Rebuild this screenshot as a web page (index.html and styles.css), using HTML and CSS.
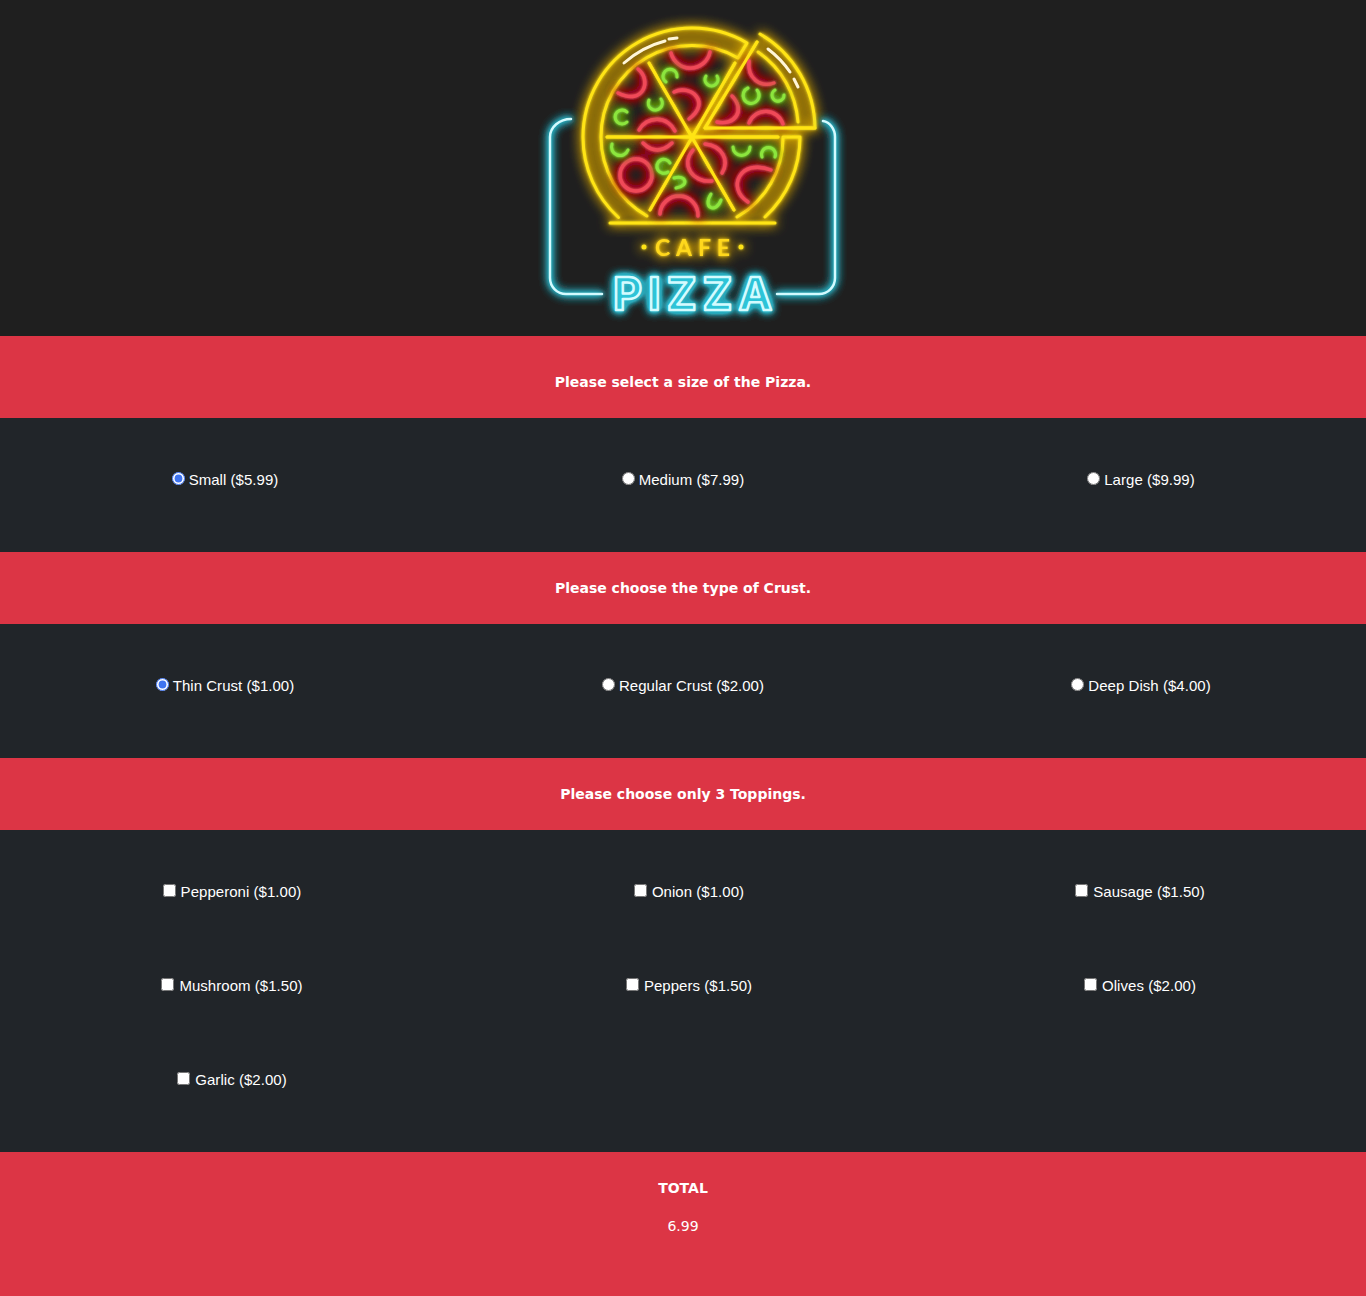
FILE: index.html
```html
<!DOCTYPE html>
<html lang="en">
<head>
  <meta charset="UTF-8">
  <meta name="viewport" content="width=device-width, initial-scale=1.0">
  <title>Cafe Pizza</title>
  <link rel="stylesheet" href="styles.css">
</head>
<body>

<header class="logo-bar">
  <svg class="logo" viewBox="500 0 366 336" width="366" height="336" role="img" aria-label="Cafe Pizza">
    <defs>
      <filter id="glow-yellow" x="-30%" y="-30%" width="160%" height="160%">
        <feGaussianBlur in="SourceAlpha" stdDeviation="6" result="blur"/>
        <feFlood flood-color="#c99a00"/>
        <feComposite in2="blur" operator="in" result="tint"/>
        <feComponentTransfer in="tint" result="halo"><feFuncA type="linear" slope="2.8"/></feComponentTransfer>
        <feGaussianBlur in="SourceGraphic" stdDeviation="1.5" result="near"/>
        <feMerge>
          <feMergeNode in="halo"/>
          <feMergeNode in="near"/>
          <feMergeNode in="SourceGraphic"/>
        </feMerge>
      </filter>
      <filter id="glow-red" x="-40%" y="-40%" width="180%" height="180%">
        <feGaussianBlur in="SourceAlpha" stdDeviation="6" result="blur"/>
        <feFlood flood-color="#a30f1a"/>
        <feComposite in2="blur" operator="in" result="tint"/>
        <feComponentTransfer in="tint" result="halo"><feFuncA type="linear" slope="4"/></feComponentTransfer>
        <feGaussianBlur in="SourceGraphic" stdDeviation="1" result="near"/>
        <feMerge>
          <feMergeNode in="halo"/>
          <feMergeNode in="near"/>
          <feMergeNode in="SourceGraphic"/>
        </feMerge>
      </filter>
      <filter id="glow-green" x="-40%" y="-40%" width="180%" height="180%">
        <feGaussianBlur in="SourceAlpha" stdDeviation="4" result="blur"/>
        <feFlood flood-color="#5f9a14"/>
        <feComposite in2="blur" operator="in" result="tint"/>
        <feComponentTransfer in="tint" result="halo"><feFuncA type="linear" slope="3"/></feComponentTransfer>
        <feGaussianBlur in="SourceGraphic" stdDeviation="1" result="near"/>
        <feMerge>
          <feMergeNode in="halo"/>
          <feMergeNode in="near"/>
          <feMergeNode in="SourceGraphic"/>
        </feMerge>
      </filter>
      <filter id="glow-cyan" x="-30%" y="-30%" width="160%" height="160%">
        <feGaussianBlur in="SourceAlpha" stdDeviation="5" result="blur"/>
        <feFlood flood-color="#2a9fb0"/>
        <feComposite in2="blur" operator="in" result="tint"/>
        <feComponentTransfer in="tint" result="halo"><feFuncA type="linear" slope="3"/></feComponentTransfer>
        <feGaussianBlur in="SourceGraphic" stdDeviation="2" result="near"/>
        <feMerge>
          <feMergeNode in="halo"/>
          <feMergeNode in="near"/>
        </feMerge>
      </filter>
      <filter id="soft"><feGaussianBlur stdDeviation="2"/></filter>
    </defs>

    <!-- crust tint -->
    <g class="crust-fill" filter="url(#soft)">
      <path d="M618.5 217.5A109 109 0 0 1 583 137A109 109 0 0 1 747 43L738 58A91 91 0 0 0 601 137A91 91 0 0 0 647 216Z"/>
      <path d="M760 34A110 110 0 0 1 815 128L798 122A93 93 0 0 0 758 52Z"/>
      <path d="M765 217A109 109 0 0 0 800 137L783 137A91 91 0 0 1 737 217Z"/>
    </g>

    <!-- pizza outline -->
    <g class="neon yellow" filter="url(#glow-yellow)">
      <path d="M618.5 217.5A109 109 0 0 1 583 137A109 109 0 0 1 747 43L738 58A91 91 0 0 0 601 137A91 91 0 0 0 647 216"/>
      <path d="M765 217A109 109 0 0 0 800 137L783 137A91 91 0 0 1 737 217"/>
      <path d="M607 137H778"/>
      <path d="M649 63L734 210"/>
      <path d="M735 63L650 210"/>
      <path d="M610 223H775"/>
      <path d="M757 42L705 128H815A110 110 0 0 0 760 34"/>
      <path d="M758 52A93 93 0 0 1 798 122"/>
      <circle class="dot" cx="644" cy="247" r="1"/>
      <circle class="dot" cx="741" cy="247" r="1"/>
      <text class="cafe" x="655" y="256" textLength="75">CAFE</text>
    </g>

    <!-- pepperoni -->
    <g class="neon red" filter="url(#glow-red)">
      <path d="M671 53A20 20 0 0 0 710 52"/>
      <path d="M638 69C652 80 644 106 618 93"/>
      <path d="M674 92C690 84 712 102 689 119"/>
      <path d="M639 130A20 20 0 0 1 675 131"/>
      <path d="M749 61C747 78 760 88 774 83"/>
      <path d="M717 122C735 126 746 110 732 96"/>
      <path d="M749 123A18 18 0 0 1 783 124"/>
      <path d="M643 143Q657 157 672 143"/>
      <path d="M705 144C722 146 730 160 722 173"/>
      <path d="M693 150C680 165 693 183 712 181"/>
      <circle cx="636" cy="175" r="16"/>
      <path d="M660 214A19 19 0 0 1 698 216"/>
      <path d="M748 202C726 188 740 158 771 170"/>
    </g>

    <!-- peppers -->
    <g class="neon green" filter="url(#glow-green)">
      <path d="M677 77A7 7 0 1 0 666 82"/>
      <path d="M706 76A6.5 6.5 0 1 0 717 76"/>
      <path d="M649 100A7 7 0 1 0 661 99"/>
      <path d="M627 112A7 7 0 1 0 627 122"/>
      <path d="M748 88A8 8 0 1 0 757 90"/>
      <path d="M775 90A6 6 0 1 0 784 95"/>
      <path d="M612 144A8 8 0 0 0 628 150"/>
      <path d="M670 163A7 7 0 1 0 668 172"/>
      <path d="M733 147A8 8 0 0 0 750 147"/>
      <path d="M762 157A7 7 0 1 1 775 157"/>
      <path d="M674 178C686 174 690 186 676 188"/>
      <path d="M711 194C702 208 716 214 721 200"/>
    </g>

    <!-- spokes again, the toppings' glow should not wash them out -->
    <g class="neon yellow">
      <path d="M607 137H778"/>
      <path d="M649 63L734 210"/>
      <path d="M735 63L650 210"/>
      <path d="M757 42L705 128H815"/>
    </g>

    <!-- highlights on the crust -->
    <g class="neon white">
      <path d="M624 63A100 100 0 0 1 665 41"/>
      <path d="M669 39L677 38"/>
      <path d="M768 49A100 100 0 0 1 790 72"/>
      <path d="M794 79L798 87"/>
    </g>

    <!-- sign frame and name -->
    <g class="neon cyan" filter="url(#glow-cyan)">
      <path d="M571 119A21 18 0 0 0 550 137V278A16 16 0 0 0 566 294H602"/>
      <path d="M823 121A14 16 0 0 1 835 137V278A16 16 0 0 1 819 294H777"/>
      <text class="pizza pizza-halo" x="613" y="310" textLength="159">PIZZA</text>
    </g>
    <g class="neon pale">
      <path d="M571 119A21 18 0 0 0 550 137V278A16 16 0 0 0 566 294H602"/>
      <path d="M823 121A14 16 0 0 1 835 137V278A16 16 0 0 1 819 294H777"/>
      <text class="pizza" x="613" y="310" textLength="159">PIZZA</text>
    </g>
  </svg>
</header>

<form>
  <h2 class="band band-first">Please select a size of the Pizza.</h2>
  <div class="options">
    <label class="option"><input type="radio" name="size" checked>Small ($5.99)</label>
    <label class="option"><input type="radio" name="size">Medium ($7.99)</label>
    <label class="option"><input type="radio" name="size">Large ($9.99)</label>
  </div>

  <h2 class="band">Please choose the type of Crust.</h2>
  <div class="options">
    <label class="option"><input type="radio" name="crust" checked>Thin Crust ($1.00)</label>
    <label class="option"><input type="radio" name="crust">Regular Crust ($2.00)</label>
    <label class="option"><input type="radio" name="crust">Deep Dish ($4.00)</label>
  </div>

  <h2 class="band">Please choose only 3 Toppings.</h2>
  <div class="options toppings">
    <label class="option"><input type="checkbox">Pepperoni ($1.00)</label>
    <label class="option"><input type="checkbox">Onion ($1.00)</label>
    <label class="option"><input type="checkbox">Sausage ($1.50)</label>
    <label class="option"><input type="checkbox">Mushroom ($1.50)</label>
    <label class="option"><input type="checkbox">Peppers ($1.50)</label>
    <label class="option"><input type="checkbox">Olives ($2.00)</label>
    <label class="option"><input type="checkbox">Garlic ($2.00)</label>
  </div>

  <div class="total">
    <h2 class="total-label">TOTAL</h2>
    <p class="total-value">6.99</p>
  </div>
</form>

</body>
</html>
```

FILE: styles.css
```css
body {
  margin: 0;
  background-color: #212529;
  color: #fff;
  font-family: "Liberation Sans", Arial, sans-serif;
  font-size: 15px;
}

.logo-bar {
  display: flex;
  justify-content: center;
  height: 336px;
  background-color: #1f1f1f;
}

.logo {
  display: block;
}

.neon {
  fill: none;
  stroke-linecap: round;
  stroke-linejoin: round;
  stroke-width: 3;
}

.neon.yellow { stroke: #ffe414; }
.neon.red { stroke: #f04a58; stroke-width: 3.4; }
.neon.green { stroke: #8ce63e; }
.neon.white { stroke: #fff6d8; }
.neon.cyan { stroke: #2fc4d8; }
.neon.pale { stroke: #d4fbff; stroke-width: 2.5; }

.crust-fill {
  fill: #a47c00;
  opacity: 0.55;
}

.dot {
  fill: #ffe414;
}

.cafe {
  fill: #ffd81c;
  stroke: none;
  font-family: Lato, sans-serif;
  font-size: 23px;
  font-weight: 700;
}

.pizza {
  font-family: Inter, sans-serif;
  font-size: 45px;
  font-weight: 700;
}

.pizza-halo {
  fill: #2fc4d8;
}

.band {
  margin: 0;
  padding: 28px 0;
  background-color: #dc3545;
  font-family: "DejaVu Sans", Verdana, sans-serif;
  font-size: 14px;
  font-weight: 700;
  line-height: 16px;
  text-align: center;
}

.band-first {
  padding-top: 38px;
}

.options {
  display: grid;
  grid-template-columns: repeat(3, 458px);
  justify-content: center;
  padding: 15px 0 25px;
  overflow: hidden;
}

.toppings {
  grid-template-columns: 464px 450px 452px;
}

.option {
  display: flex;
  justify-content: center;
  align-items: center;
  height: 94px;
  box-sizing: border-box;
  padding-bottom: 2px;
  letter-spacing: 0.04px;
}

.option input {
  margin: 0 4px 1px 0;
  accent-color: #3f74f0;
}

.toppings .option input {
  margin-right: 5px;
}

.total {
  height: 144px;
  box-sizing: border-box;
  padding-top: 28px;
  background-color: #dc3545;
  font-family: "DejaVu Sans", Verdana, sans-serif;
  font-size: 14px;
  text-align: center;
}

.total-label {
  margin: 0 0 22px;
  font-size: 14px;
  line-height: 16px;
}

.total-value {
  margin: 0;
  line-height: 16px;
}
```
